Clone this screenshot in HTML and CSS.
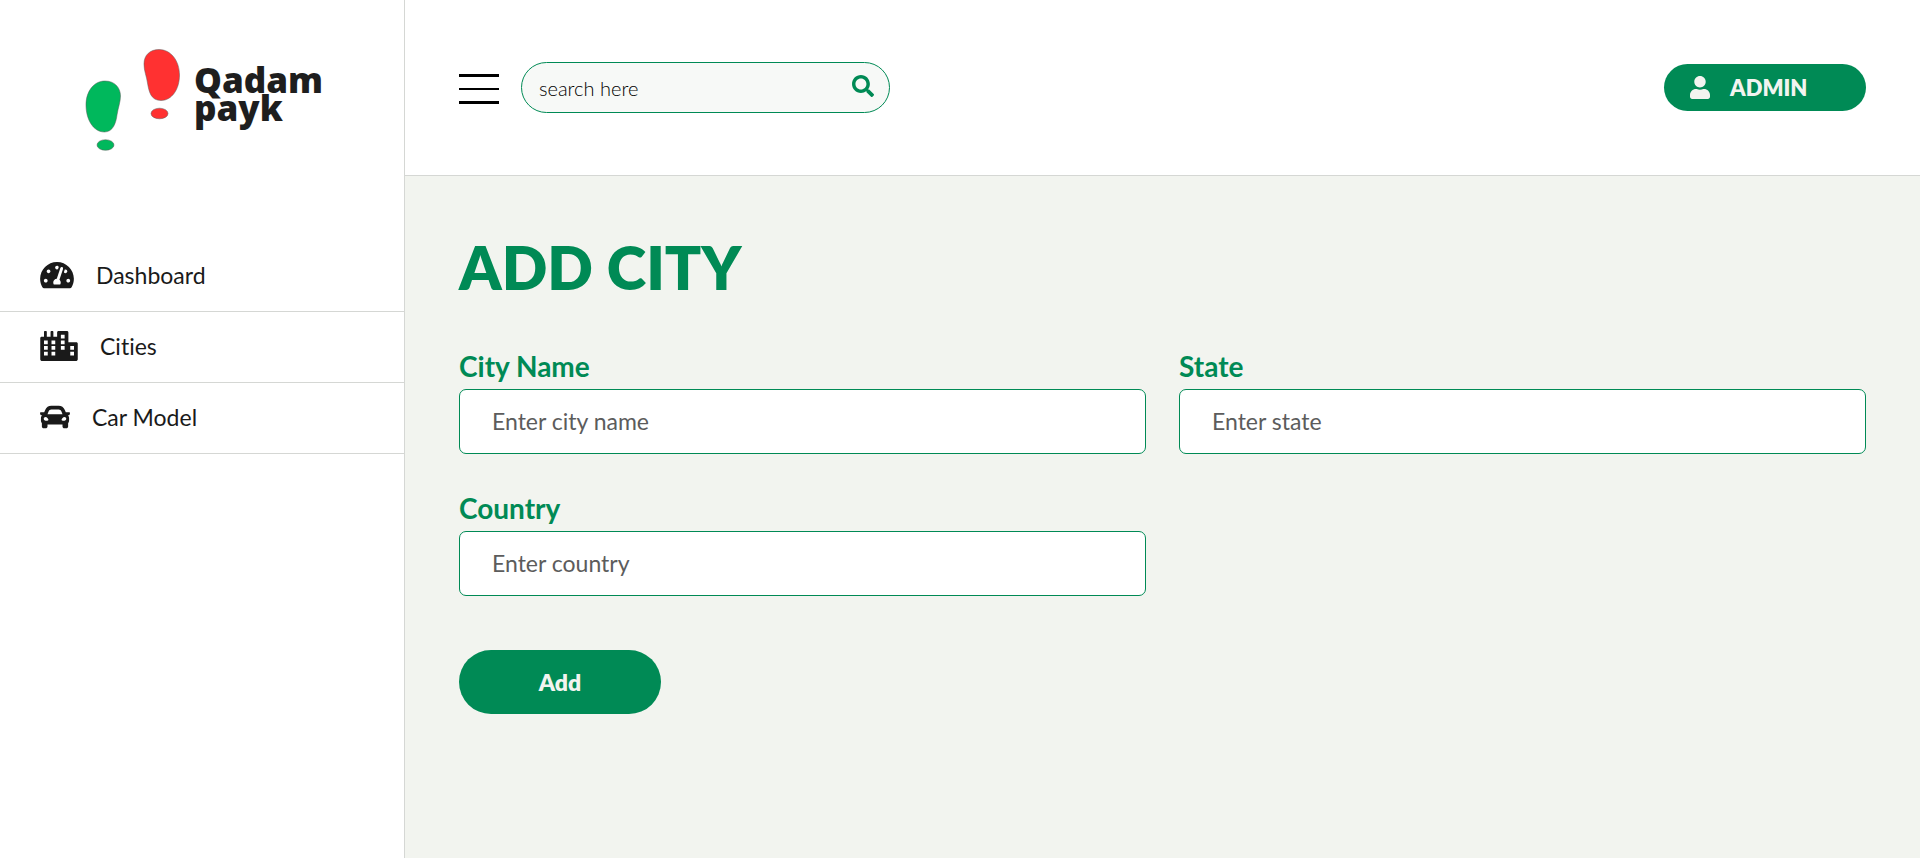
FILE: index.html
```html
<!DOCTYPE html>
<html lang="en">
<head>
<meta charset="utf-8">
<meta name="viewport" content="width=device-width, initial-scale=1">
<title>Qadam payk - Add City</title>
<link rel="stylesheet" href="styles.css">
</head>
<body>
<div class="layout">
  <aside class="sidebar">
    <a class="logo" href="#">
      <svg class="logo-mark" viewBox="0 0 96 103" aria-hidden="true">
        <g stroke="#5b5b5b" stroke-width=".5">
          <path fill="#00b85c" d="M20 32C30 32 35.500 39 35.500 47C35.500 53 33 59 32 66C31 74 28 83 19.500 83C8 83 1 70 1 56C1 42 9 32 20 32Z"/>
          <ellipse fill="#00b85c" cx="20.500" cy="96" rx="8.500" ry="5.300"/>
          <path fill="#ff3131" d="M74 .500C86 .500 94.500 12 94.500 26C94.500 40 87 51.500 76 51.500C66 51.500 64 43 62.500 34C61.500 27 59 22 59 15C59 6 65 .500 74 .500Z"/>
          <ellipse fill="#ff3131" cx="74.500" cy="64.500" rx="8.500" ry="5.300"/>
        </g>
      </svg>
      <span class="logo-text">Qadam<br>payk</span>
    </a>
    <nav class="menu">
      <a class="menu-item" href="#">
        <svg class="icon-gauge" viewBox="0 0 576 512" fill="currentColor" aria-hidden="true"><path d="M288 32C128.940 32 0 160.940 0 320c0 52.800 14.250 102.260 39.060 144.800 5.610 9.620 16.300 15.200 27.440 15.200h443c11.140 0 21.830-5.580 27.440-15.200C561.750 422.260 576 372.800 576 320c0-159.060-128.940-288-288-288zm0 64c14.710 0 26.580 10.130 30.320 23.650-1.110 2.260-2.640 4.230-3.450 6.670l-9.220 27.670c-5.130 3.490-10.970 6.010-17.640 6.010-17.670 0-32-14.330-32-32S270.330 96 288 96zM96 384c-17.670 0-32-14.330-32-32s14.330-32 32-32 32 14.330 32 32-14.330 32-32 32zm48-160c-17.670 0-32-14.330-32-32s14.330-32 32-32 32 14.330 32 32-14.330 32-32 32zm246.770-72.410l-61.330 184C343.130 347.330 352 364.540 352 384c0 11.720-3.380 22.550-8.880 32H232.880c-5.500-9.450-8.880-20.280-8.880-32 0-33.940 26.500-61.430 59.900-63.590l61.340-184.010c4.170-12.560 17.730-19.450 30.360-15.170 12.570 4.190 19.350 17.790 15.170 30.360zm14.660 57.200l15.520-46.550c3.470-1.290 7.130-2.230 11.050-2.230 17.670 0 32 14.330 32 32s-14.330 32-32 32c-11.380-.01-20.890-6.280-26.570-15.220zM480 384c-17.670 0-32-14.330-32-32s14.330-32 32-32 32 14.330 32 32-14.330 32-32 32z"/></svg>
        <span>Dashboard</span>
      </a>
      <a class="menu-item" href="#">
        <svg class="icon-city" viewBox="0 0 640 512" fill="currentColor" fill-rule="evenodd" aria-hidden="true"><path d="M616 192H480V24c0-13.260-10.740-24-24-24H312c-13.260 0-24 10.740-24 24v72h-64V16c0-8.840-7.160-16-16-16h-16c-8.840 0-16 7.160-16 16v80h-64V16c0-8.840-7.160-16-16-16H80c-8.840 0-16 7.160-16 16v80H24c-13.260 0-24 10.740-24 24v360c0 17.670 14.330 32 32 32h576c17.670 0 32-14.330 32-32V216c0-13.260-10.750-24-24-24zM64 160h64v64H64zM64 256h64v64H64zM64 352h64v64H64zM192 160h64v64h-64zM192 256h64v64h-64zM192 352h64v64h-64zM352 64h64v64h-64zM352 160h64v64h-64zM352 256h64v64h-64zM512 256h64v64h-64zM512 352h64v64h-64z"/></svg>
        <span>Cities</span>
      </a>
      <a class="menu-item" href="#">
        <svg class="icon-car" viewBox="0 0 512 512" fill="currentColor" aria-hidden="true"><path d="M499.990 176h-59.870l-16.640-41.600C406.380 91.630 365.570 64 319.500 64h-127c-46.060 0-86.880 27.630-103.990 70.400L71.870 176H12.010C4.200 176-1.530 183.340.37 190.910l6 24C7.700 220.250 12.500 224 18.010 224h20.070C24.650 235.730 16 252.780 16 272v48c0 16.120 6.160 30.670 16 41.930V416c0 17.670 14.330 32 32 32h32c17.670 0 32-14.330 32-32v-32h256v32c0 17.670 14.330 32 32 32h32c17.670 0 32-14.330 32-32v-54.070c9.840-11.250 16-25.800 16-41.930v-48c0-19.220-8.650-36.270-22.070-48H494c5.510 0 10.310-3.750 11.640-9.090l6-24c1.890-7.570-3.840-14.910-11.650-14.910zm-352.060-17.830c7.290-18.220 24.940-30.170 44.570-30.170h127c19.630 0 37.280 11.950 44.570 30.170L384 208H128l19.930-49.830zM96 319.800c-19.200 0-32-12.760-32-31.900S76.800 256 96 256s48 28.710 48 47.850-28.800 15.950-48 15.950zm320 0c-19.200 0-48 3.190-48-15.950S396.800 256 416 256s32 12.760 32 31.900-12.800 31.900-32 31.900z"/></svg>
        <span>Car Model</span>
      </a>
    </nav>
  </aside>
  <div class="page">
    <header class="topbar">
      <button class="menu-toggle" type="button" aria-label="Toggle menu">
        <span class="bar"></span><span class="bar bar-thin"></span><span class="bar"></span>
      </button>
      <form class="search">
        <input class="search-input" type="search" placeholder="search here" aria-label="Search">
        <button class="search-button" type="submit" aria-label="Search">
          <svg class="icon-search" viewBox="0 0 512 512" fill="currentColor" aria-hidden="true"><path d="M505 442.700L405.300 343c-4.500-4.500-10.600-7-17-7H372c27.600-35.300 44-79.700 44-128C416 93.100 322.900 0 208 0S0 93.100 0 208s93.100 208 208 208c48.300 0 92.700-16.400 128-44v16.300c0 6.400 2.500 12.500 7 17l99.700 99.700c9.400 9.400 24.600 9.400 33.900 0l28.300-28.300c9.400-9.400 9.400-24.600.1-34zM208 336c-70.700 0-128-57.200-128-128 0-70.700 57.200-128 128-128 70.700 0 128 57.200 128 128 0 70.700-57.200 128-128 128z"/></svg>
        </button>
      </form>
      <button class="account" type="button">
        <svg class="icon-user" viewBox="0 0 448 512" fill="currentColor" aria-hidden="true"><path d="M224 256c70.700 0 128-57.300 128-128S294.700 0 224 0 96 57.300 96 128s57.300 128 128 128zm89.600 32h-16.700c-22.200 10.200-46.900 16-72.900 16s-50.600-5.800-72.900-16h-16.700C60.200 288 0 348.200 0 422.400V464c0 26.500 21.500 48 48 48h352c26.500 0 48-21.500 48-48v-41.600c0-74.200-60.200-134.400-134.400-134.400z"/></svg>
        <span>ADMIN</span>
      </button>
    </header>
    <main class="content">
      <h1 class="title">ADD CITY</h1>
      <form>
        <div class="fields">
          <div class="field">
            <label for="city">City Name</label>
            <input id="city" type="text" placeholder="Enter city name">
          </div>
          <div class="field">
            <label for="state">State</label>
            <input id="state" type="text" placeholder="Enter state">
          </div>
          <div class="field">
            <label for="country">Country</label>
            <input id="country" type="text" placeholder="Enter country">
          </div>
        </div>
        <button class="submit" type="submit">Add</button>
      </form>
    </main>
  </div>
</div>
</body>
</html>
```
FILE: styles.css
```css
* {
  box-sizing: border-box;
}

body {
  margin: 0;
  background: #fff;
  color: #1a1a1a;
  font-family: Lato, "Noto Sans", sans-serif;
  font-variant-ligatures: none;
}

input,
button {
  font-family: inherit;
}

button {
  border: 0;
  padding: 0;
  cursor: pointer;
}

svg {
  display: block;
  flex: none;
}

.layout {
  display: flex;
  min-height: 100vh;
}

/* Sidebar */

.sidebar {
  flex: none;
  width: 405px;
  border-right: 1px solid #d5d7d4;
}

.logo {
  display: flex;
  gap: 13px;
  padding: 49px 0 0 85px;
  color: #1e1e1e;
  text-decoration: none;
}

.logo-mark {
  width: 96px;
  height: 103px;
}

.logo-text {
  padding-top: 17px;
  font: 800 35px/28px "Open Sans", sans-serif;
}

.menu {
  margin-top: 89px;
}

.menu-item {
  display: flex;
  align-items: center;
  gap: 22px;
  height: 71px;
  padding: 0 40px 2px;
  border-bottom: 1px solid #d5d7d4;
  color: inherit;
  font-size: 23px;
  text-decoration: none;
}

.icon-gauge {
  width: 34px;
  height: 30px;
}

.icon-city {
  width: 38px;
  height: 30px;
}

.icon-car {
  width: 30px;
  height: 30px;
}

/* Top bar */

.page {
  flex: 1;
  display: flex;
  flex-direction: column;
  min-width: 0;
}

.topbar {
  display: flex;
  align-items: center;
  height: 176px;
  padding: 0 54px;
  border-bottom: 1px solid #d5d7d4;
}

.menu-toggle {
  display: flex;
  flex-direction: column;
  justify-content: space-between;
  width: 40px;
  height: 30px;
  margin: 2px 22px 0 0;
  background: none;
}

.bar {
  height: 3px;
  background: #000;
}

.bar-thin {
  height: 2px;
}

.search {
  display: flex;
  align-items: center;
  width: 369px;
  height: 51px;
  padding: 0 15px 0 17px;
  border: 1px solid #008a55;
  border-radius: 26px;
  background: #f7f9f7;
}

.search-input {
  flex: 1;
  min-width: 0;
  padding: 0;
  border: 0;
  outline: 0;
  background: none;
  font-size: 20px;
  font-weight: 300;
}

.search-input::placeholder {
  color: #000;
  opacity: 1;
}

.search-button {
  padding-bottom: 4px;
  background: none;
  color: #008a55;
}

.icon-search {
  width: 22px;
  height: 22px;
}

.account {
  display: flex;
  align-items: center;
  gap: 20px;
  width: 202px;
  height: 47px;
  margin-left: auto;
  padding: 0 26px;
  border-radius: 24px;
  background: #008a55;
  color: #f2f4f0;
  font-size: 22px;
  font-weight: 800;
}

.icon-user {
  width: 20px;
  height: 23px;
}

/* Form */

.content {
  flex: 1;
  padding: 53px 54px;
  background: #f2f4ef;
}

.title {
  margin: 0 0 43px;
  color: #008a55;
  font-size: 60px;
  font-weight: 800;
  line-height: 76px;
}

.fields {
  display: grid;
  grid-template-columns: 1fr 1fr;
  gap: 36px 33px;
}

.field label {
  display: block;
  margin-bottom: 5px;
  color: #008a55;
  font-size: 28px;
  font-weight: 700;
  line-height: 36px;
}

.field input {
  display: block;
  width: 100%;
  height: 65px;
  padding: 0 32px 2px;
  border: 1px solid #008a55;
  border-radius: 7px;
  background: #fff;
  font-size: 23px;
}

.field input::placeholder {
  color: #5c5c5c;
  opacity: 1;
}

.submit {
  width: 202px;
  height: 64px;
  margin-top: 54px;
  border-radius: 32px;
  background: #008a55;
  color: #f2f4f0;
  font-size: 23px;
  font-weight: 800;
}
```
